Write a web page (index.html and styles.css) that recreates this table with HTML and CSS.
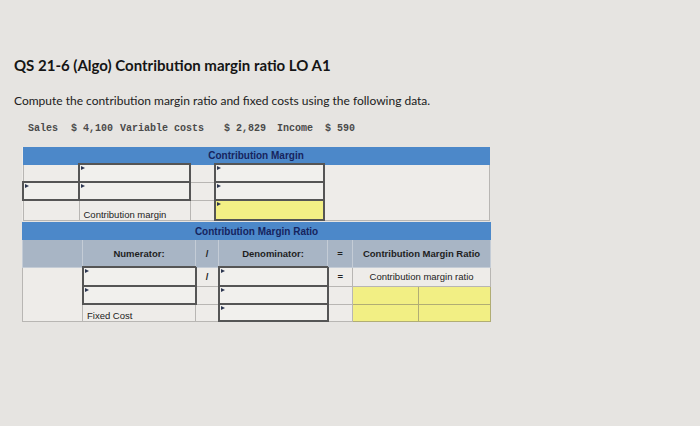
FILE: index.html
```html
<!DOCTYPE html>
<html>
<head>
<meta charset="utf-8">
<link rel="stylesheet" href="styles.css">
</head>
<body>
<div class="page">
  <h1 class="title">QS 21-6 (Algo) Contribution margin ratio LO A1</h1>
  <p class="intro">Compute the contribution margin ratio and fixed costs using the following data.</p>
  <div class="data">
    <span class="d d1">Sales</span>
    <span class="d d2">$ 4,100</span>
    <span class="d d3">Variable costs</span>
    <span class="d d4">$ 2,829</span>
    <span class="d d5">Income</span>
    <span class="d d6">$ 590</span>
  </div>

  <table class="grid t1">
    <colgroup>
      <col class="c56"><col class="c111"><col class="c25"><col class="c109"><col class="c165">
    </colgroup>
    <tr class="head"><th colspan="5">Contribution Margin</th></tr>
    <tr class="r18">
      <td></td>
      <td class="inp mark"></td>
      <td></td>
      <td class="inp mark"></td>
      <td rowspan="3"></td>
    </tr>
    <tr class="r18">
      <td class="inp mark"></td>
      <td class="inp mark"></td>
      <td></td>
      <td class="inp mark"></td>
    </tr>
    <tr class="r21">
      <td></td>
      <td class="lbl">Contribution margin</td>
      <td></td>
      <td class="inp yel mark"></td>
    </tr>
  </table>

  <table class="grid t2">
    <colgroup>
      <col class="c60"><col class="c113"><col class="c23"><col class="c109"><col class="c25"><col class="c66"><col class="c72">
    </colgroup>
    <tr class="head head2"><th colspan="7">Contribution Margin Ratio</th></tr>
    <tr class="sub">
      <td></td>
      <td>Numerator:</td>
      <td class="op">/</td>
      <td>Denominator:</td>
      <td class="op">=</td>
      <td colspan="2">Contribution Margin Ratio</td>
    </tr>
    <tr class="r19">
      <td rowspan="3"></td>
      <td class="inp mark"></td>
      <td class="op">/</td>
      <td class="inp mark"></td>
      <td class="op">=</td>
      <td colspan="2" class="ctr">Contribution margin ratio</td>
    </tr>
    <tr class="r18">
      <td class="inp mark"></td>
      <td></td>
      <td class="inp mark"></td>
      <td></td>
      <td class="yel"></td>
      <td class="yel"></td>
    </tr>
    <tr class="r17">
      <td class="lbl">Fixed Cost</td>
      <td></td>
      <td class="inp mark"></td>
      <td></td>
      <td class="yel"></td>
      <td class="yel"></td>
    </tr>
  </table>
</div>
</body>
</html>
```

FILE: styles.css
```css
html, body {
  margin: 0;
  padding: 0;
  background: #e6e4e1;
}
.page {
  padding: 56px 0 0 14px;
  font-family: "Liberation Sans", Arial, sans-serif;
  color: #1a1a1a;
}
.title {
  margin: 0;
  font-family: Lato, "Liberation Sans", sans-serif;
  font-weight: 700;
  font-size: 15px;
  line-height: 18px;
  color: #151515;
}
.intro {
  margin: 19px 0 0 0;
  font-family: Lato, "Liberation Sans", sans-serif;
  font-size: 12px;
  line-height: 16px;
  color: #202020;
}
.data {
  display: flex;
  margin: 14px 0 0 14px;
  font-family: "Liberation Mono", monospace;
  font-size: 10px;
  line-height: 12px;
  font-weight: 700;
  color: #4a4a4a;
}
.d1 { width: 43px; }
.d2 { width: 49px; }
.d3 { width: 104px; }
.d4 { width: 53px; }
.d5 { width: 48px; }

.grid {
  border-collapse: collapse;
  table-layout: fixed;
  margin-left: 8px;
  background: #eeece9;
}
.t1 { margin-top: 12px; width: 466px; }
.t2 { margin-top: 1px; width: 468px; }

.c56 { width: 56px; }
.c111 { width: 111px; }
.c25 { width: 25px; }
.c109 { width: 109px; }
.c165 { width: 165px; }
.c60 { width: 60px; }
.c113 { width: 113px; }
.c23 { width: 23px; }
.c66 { width: 66px; }
.c72 { width: 72px; }

.grid td {
  border: 1px solid #b8b6b3;
  padding: 0;
  position: relative;
  font-size: 9.5px;
  color: #222;
}
.head th {
  height: 15px;
  padding: 0;
  background: #4c88c9;
  border: 1px solid #4c88c9;
  color: #16245e;
  font-size: 10px;
  font-weight: 700;
  text-align: center;
  vertical-align: middle;
}
.head2 th { height: 16px; }
.r17 td { height: 15px; }
.r18 td { height: 16px; }
.r19 td { height: 17px; }
.r21 td { height: 18px; }
.sub td {
  height: 26px;
  background: #a8b5c5;
  border-color: #c4ccd6;
  font-weight: 700;
  text-align: center;
  color: #1e1e1e;
}
.op {
  text-align: center;
  font-weight: 700;
}
.lbl {
  padding-left: 4px !important;
  vertical-align: bottom;
}
.ctr { text-align: center; }
.grid td.inp {
  border: 2px solid #555;
  background: #f1f0ed;
}
.grid td.yel {
  background: #f2ef84;
  border-color: #b1ad74;
}
.grid td.inp.yel {
  border: 2px solid #555;
  background: #f3f085;
}
.mark::before {
  content: "";
  position: absolute;
  left: 1px;
  top: 1px;
  border-left: 4px solid #2c3650;
  border-top: 2px solid transparent;
  border-bottom: 2px solid transparent;
}
```
